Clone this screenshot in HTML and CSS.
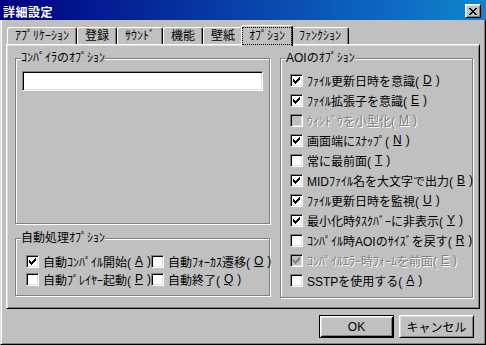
FILE: index.html
```html
<!DOCTYPE html>
<html>
<head>
    <meta charset="utf-8">
    <title>詳細設定</title>
    <link rel="stylesheet" href="styles.css">
</head>
<body>
<div class="window">
    <div class="titlebar">
        <span class="title">詳細設定</span>
        <button class="close">
            <svg width="8" height="7" viewBox="0 0 8 7" shape-rendering="crispEdges"><path d="M0 0h2v1h-2z M6 0h2v1h-2z M1 1h2v1h-2z M5 1h2v1h-2z M2 2h4v1h-4z M3 3h2v1h-2z M2 4h4v1h-4z M1 5h2v1h-2z M5 5h2v1h-2z M0 6h2v1h-2z M6 6h2v1h-2z"/></svg>
        </button>
    </div>
    <div class="main">
        <div class="tabs">
            <div class="tab">ｱﾌﾟﾘｹｰｼｮﾝ</div>
            <div class="tab">登録</div>
            <div class="tab">ｻｳﾝﾄﾞ</div>
            <div class="tab">機能</div>
            <div class="tab">壁紙</div>
            <div class="tab active"><span class="focus">ｵﾌﾟｼｮﾝ</span></div>
            <div class="tab">ﾌｧﾝｸｼｮﾝ</div>
        </div>
        <div class="panel">
            <div class="col-left">
                <fieldset class="group group-compiler">
                    <legend>ｺﾝﾊﾟｲﾗのｵﾌﾟｼｮﾝ</legend>
                    <input class="field" type="text">
                </fieldset>
                <fieldset class="group group-auto">
                    <legend>自動処理ｵﾌﾟｼｮﾝ</legend>
                    <div class="auto-grid">
                        <label class="check"><span class="box"><svg class="tick" viewBox="0 0 7 7"><path d="M0 2H1V3H2V4H3V3H4V2H5V1H6V0H7V3H6V4H5V5H4V6H3V7H2V6H1V5H0Z"/></svg></span>自動ｺﾝﾊﾟｲﾙ開始(<u>A</u>)</label>
                        <label class="check"><span class="box"></span>自動ﾌｫｰｶｽ遷移(<u>O</u>)</label>
                        <label class="check"><span class="box"></span>自動ﾌﾟﾚｲﾔｰ起動(<u>P</u>)</label>
                        <label class="check"><span class="box"></span>自動終了(<u>Q</u>)</label>
                    </div>
                </fieldset>
            </div>
            <fieldset class="group group-aoi">
                <legend>AOIのｵﾌﾟｼｮﾝ</legend>
                <div class="aoi-list">
                    <label class="check"><span class="box"><svg class="tick" viewBox="0 0 7 7"><path d="M0 2H1V3H2V4H3V3H4V2H5V1H6V0H7V3H6V4H5V5H4V6H3V7H2V6H1V5H0Z"/></svg></span>ﾌｧｲﾙ更新日時を意識(<u>D</u>)</label>
                    <label class="check"><span class="box"><svg class="tick" viewBox="0 0 7 7"><path d="M0 2H1V3H2V4H3V3H4V2H5V1H6V0H7V3H6V4H5V5H4V6H3V7H2V6H1V5H0Z"/></svg></span>ﾌｧｲﾙ拡張子を意識(<u>E</u>)</label>
                    <label class="check disabled"><span class="box"></span>ｳｨﾝﾄﾞｳを小型化(<u>M</u>)</label>
                    <label class="check"><span class="box"><svg class="tick" viewBox="0 0 7 7"><path d="M0 2H1V3H2V4H3V3H4V2H5V1H6V0H7V3H6V4H5V5H4V6H3V7H2V6H1V5H0Z"/></svg></span>画面端にｽﾅｯﾌﾟ(<u>N</u>)</label>
                    <label class="check"><span class="box"></span>常に最前面(<u>T</u>)</label>
                    <label class="check"><span class="box"><svg class="tick" viewBox="0 0 7 7"><path d="M0 2H1V3H2V4H3V3H4V2H5V1H6V0H7V3H6V4H5V5H4V6H3V7H2V6H1V5H0Z"/></svg></span>MIDﾌｧｲﾙ名を大文字で出力(<u>B</u>)</label>
                    <label class="check"><span class="box"><svg class="tick" viewBox="0 0 7 7"><path d="M0 2H1V3H2V4H3V3H4V2H5V1H6V0H7V3H6V4H5V5H4V6H3V7H2V6H1V5H0Z"/></svg></span>ﾌｧｲﾙ更新日時を監視(<u>U</u>)</label>
                    <label class="check"><span class="box"><svg class="tick" viewBox="0 0 7 7"><path d="M0 2H1V3H2V4H3V3H4V2H5V1H6V0H7V3H6V4H5V5H4V6H3V7H2V6H1V5H0Z"/></svg></span>最小化時ﾀｽｸﾊﾞｰに非表示(<u>Y</u>)</label>
                    <label class="check"><span class="box"></span>ｺﾝﾊﾟｲﾙ時AOIのｻｲｽﾞを戻す(<u>R</u>)</label>
                    <label class="check disabled"><span class="box"><svg class="tick" viewBox="0 0 7 7"><path d="M0 2H1V3H2V4H3V3H4V2H5V1H6V0H7V3H6V4H5V5H4V6H3V7H2V6H1V5H0Z"/></svg></span>ｺﾝﾊﾟｲﾙｴﾗｰ時ﾌｫｰﾑを前面(<u>E</u>)</label>
                    <label class="check"><span class="box"></span>SSTPを使用する(<u>A</u>)</label>
                </div>
            </fieldset>
        </div>
        <div class="buttons">
            <button class="btn default">OK</button>
            <button class="btn">キャンセル</button>
        </div>
    </div>
</div>
</body>
</html>
```

FILE: styles.css
```css
* {
  box-sizing: border-box;
}
body {
  margin: 0;
  background: #c0c0c0;
  font-family: "Liberation Sans", "Noto Sans CJK JP", sans-serif;
  font-size: 12px;
  color: #000;
  text-autospace: no-autospace;
}
.window {
  width: 486px;
  height: 345px;
  display: flex;
  flex-direction: column;
}

/* title bar */
.titlebar {
  flex: none;
  height: 20px;
  display: flex;
  align-items: center;
  padding: 2px 5px 0 3px;
  background: linear-gradient(to right, #000080, #1084d0);
}
.title {
  flex: 1;
  color: #fff;
  font-weight: bold;
  letter-spacing: 0.5px;
}
.close {
  width: 16px;
  height: 14px;
  padding: 0;
  display: flex;
  align-items: center;
  justify-content: center;
  background: #c0c0c0;
  border: 1px solid;
  border-color: #fff #000 #000 #fff;
  box-shadow: inset 1px 1px #dfdfdf, inset -1px -1px #808080;
}

/* body of the dialog */
.main {
  flex: 1;
  display: flex;
  flex-direction: column;
  padding: 5px;
  border-left: 1px solid #dfdfdf;
  border-right: 1px solid #000;
  border-bottom: 1px solid #000;
  box-shadow: inset 1px 0 #fff, inset -1px -1px #808080;
}

/* tabs */
.tabs {
  display: flex;
  align-items: flex-end;
  padding-left: 1px;
}
.tab {
  height: 17px;
  padding: 0 7px;
  line-height: 16px;
  white-space: nowrap;
  border: 1px solid;
  border-bottom: none;
  border-color: #fff #000 transparent #fff;
  border-radius: 3px 3px 0 0;
  box-shadow: inset -1px 0 #808080;
  background: #c0c0c0;
}
.tab.active {
  position: relative;
  z-index: 1;
  height: 21px;
  margin: 0 -2px -2px;
  padding: 2px 1px 0 1px;
}
.focus {
  display: block;
  height: 16px;
  padding: 0 6px;
  outline: 1px dotted #000;
}

/* tab page */
.panel {
  flex: none;
  height: 265px;
  display: flex;
  gap: 10px;
  padding: 7px 6px 10px 8px;
  border: 1px solid;
  border-color: #fff #000 #000 #fff;
  box-shadow: inset 1px 1px #dfdfdf, inset -1px -1px #808080;
}
.col-left {
  width: 255px;
  display: flex;
  flex-direction: column;
  gap: 8px;
}
.group {
  margin: 0;
  min-width: 0;
  padding: 0 5px 0 5px;
  border: 1px solid #808080;
  box-shadow: inset 1px 1px #fff, 1px 1px #fff;
}
.group legend {
  padding: 0;
  line-height: 13px;
  background: #c0c0c0;
  white-space: nowrap;
}
.group-compiler {
  height: 172px;
  padding-top: 6px;
}
.group-auto {
  height: 64px;
  padding-top: 7px;
}
.group-aoi {
  flex: 1;
  padding-top: 5px;
}

.field {
  display: block;
  width: 241px;
  height: 20px;
  margin-left: 1px;
  background: #fff;
  border: 1px solid;
  border-color: #808080 #fff #fff #808080;
  box-shadow: inset 1px 1px #000, inset -1px -1px #dfdfdf;
  outline: none;
}

/* checkboxes */
.auto-grid {
  display: grid;
  grid-template-columns: 125px auto;
  margin-left: 5px;
}
.auto-grid .check {
  height: 18px;
}
.aoi-list {
  margin-left: 4px;
}
.aoi-list .check {
  height: 20px;
}
.check {
  display: flex;
  align-items: center;
  gap: 4px;
  white-space: nowrap;
}
.box {
  flex: none;
  width: 13px;
  height: 13px;
  display: flex;
  align-items: center;
  justify-content: center;
  background: #fff;
  border: 1px solid;
  border-color: #808080 #fff #fff #808080;
  box-shadow: inset 1px 1px #000, inset -1px -1px #dfdfdf;
}
.tick {
  width: 7px;
  height: 7px;
  shape-rendering: crispEdges;
}
.check.disabled {
  color: #808080;
  text-shadow: 1px 1px 0 #fff;
}
.check.disabled .box {
  background: #c0c0c0;
}
.check.disabled .tick {
  fill: #808080;
}

/* dialog buttons */
.buttons {
  display: flex;
  justify-content: flex-end;
  gap: 5px;
  margin-top: 6px;
  padding-right: 6px;
}
.btn {
  width: 75px;
  height: 23px;
  padding: 0;
  font: inherit;
  color: #000;
  background: #c0c0c0;
  border: 1px solid;
  border-color: #fff #000 #000 #fff;
  box-shadow: inset 1px 1px #dfdfdf, inset -1px -1px #808080;
}
.btn.default {
  border-color: #000;
  box-shadow: inset 1px 1px #fff, inset -1px -1px #000, inset 2px 2px #dfdfdf, inset -2px -2px #808080;
}
```
